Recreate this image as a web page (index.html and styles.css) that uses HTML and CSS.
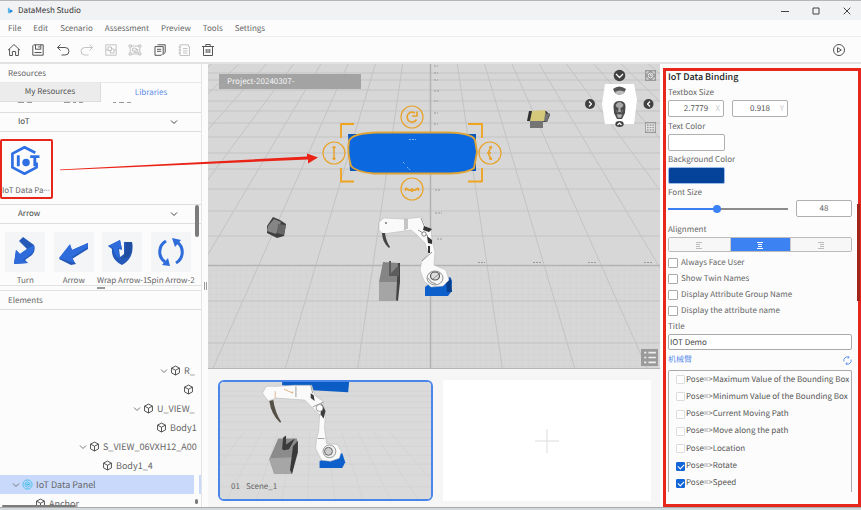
FILE: index.html
```html
<!DOCTYPE html>
<html lang="en">
<head>
<meta charset="utf-8">
<title>DataMesh Studio</title>
<link rel="stylesheet" href="styles.css">
</head>
<body>
<svg class="defs" aria-hidden="true">
  <symbol id="cube" viewBox="0 0 12 12"><path d="M6 1.2 10.3 3.4V8.6L6 10.9 1.7 8.6V3.4ZM1.7 3.4 6 5.7 10.3 3.4M6 5.7V10.9"/></symbol>
  <symbol id="chev" viewBox="0 0 8 8"><path d="M1 2.5 4 5.5 7 2.5"/></symbol>
</svg>

<header class="titlebar">
  <svg class="logo" viewBox="0 0 8 8"><path d="M1 .5 3 1.5V7.5L1 6.5Z" fill="#58b7ef"/><path d="M3 2.5 7 4.5 3 7Z" fill="#1683d8"/></svg>
  <span class="app-name">DataMesh Studio</span>
  <button class="win" aria-label="Minimize"><svg viewBox="0 0 8 8"><path d="M0 4.5H8"/></svg></button>
  <button class="win" aria-label="Maximize"><svg viewBox="0 0 8 8"><path d="M1 1H7V7H1Z"/></svg></button>
  <button class="win" aria-label="Close"><svg viewBox="0 0 8 8"><path d="M.7 .7 7.3 7.3M7.3 .7 .7 7.3"/></svg></button>
</header>

<nav class="menu">
  <a href="#">File</a><a href="#">Edit</a><a href="#">Scenario</a><a href="#">Assessment</a><a href="#">Preview</a><a href="#">Tools</a><a href="#">Settings</a>
</nav>

<div class="toolbar">
  <div class="tools">
    <button aria-label="Home"><svg viewBox="0 0 14 14"><path d="M1 7.2 7 1.5 13 7.2M2.6 6V12.5H5.4V8.5H8.6V12.5H11.4V6"/></svg></button>
    <button aria-label="Save"><svg viewBox="0 0 14 14"><path d="M1.8 2.8 2.8 1.8H12.2V12.2H1.8ZM4.5 1.8V6.2H9.8V1.8M8 3V4.8M3.5 9.5H10.5"/></svg></button>
    <button aria-label="Undo"><svg viewBox="0 0 14 14"><path d="M4.5 1.5 1.5 4.5 4.5 7.5M1.5 4.5H9.2A3.7 3.7 0 0 1 9.2 12H5.5"/></svg></button>
    <button aria-label="Redo" disabled><svg viewBox="0 0 14 14"><path d="M9.5 1.5 12.5 4.5 9.5 7.5M12.5 4.5H4.8A3.7 3.7 0 0 0 4.8 12H8.5"/></svg></button>
    <button aria-label="Group" disabled><svg viewBox="0 0 14 14"><path d="M1.8 1.8H12.2V12.2H1.8ZM4 4H7.5V7.5H4ZM7.5 6H10V10H6.2V7.5M1.8 7H4M10 7H12"/></svg></button>
    <button aria-label="Ungroup" disabled><svg viewBox="0 0 14 14"><path d="M1 2H3.5V4H1ZM10.5 2H13V4H10.5ZM1 10H3.5V12H1ZM10.5 10H13V12H10.5ZM3.5 3H10.5M3.5 11H10.5M2.2 4V10M11.8 4V10M4.5 5.2H8.2V8H4.5ZM8.2 6.5H9.8V9.5H6V8"/></svg></button>
    <button aria-label="Copy"><svg viewBox="0 0 14 14"><path d="M4.5 1.8H12.2V9.5L10 11.5M10.2 3.6H2V12.3H8.2L10.2 10.3ZM4 6.3H8.2M4 8.3H8.2"/></svg></button>
    <button aria-label="Paste" disabled><svg viewBox="0 0 14 14"><path d="M3 1.8H11.5V3.5H12.5V12.5H3ZM1.5 4H4M1.5 7H4M1.5 10H4M6 5.5H10.5M6 7.8H10.5M6 10H10.5"/></svg></button>
    <button aria-label="Delete"><svg viewBox="0 0 14 14"><path d="M1 3.5H13M4.8 3.5V1.5H9.2V3.5M2.5 3.5V12.5H11.5V3.5M5.2 6V10M7 6V10M8.8 6V10"/></svg></button>
  </div>
  <button class="play" aria-label="Play"><svg viewBox="0 0 14 14"><circle cx="7" cy="7" r="5.5"/><path d="M5.5 4.6 9.3 7 5.5 9.4Z"/></svg></button>
</div>

<main>
  <aside class="left">
    <h2 class="head">Resources</h2>
    <div class="tabs"><button class="tab">My Resources</button><button class="tab on">Libraries</button></div>
    <svg class="cut" viewBox="0 0 201 10"><path d="M18 .5H24M27 .5H32M64 .5H70M73 .5H76M79 .5H83M113 .5H116M119 .5H124M127 .5H131"/></svg>
    <button class="group">IoT<svg><use href="#chev"/></svg></button>
    <div class="iot">
      <button class="asset marked">
        <svg viewBox="0 0 30 30" fill="none" stroke="#2f6fe4" stroke-width="2.6"><path d="M25.500 7.500 15 2.200 3.300 8.300V21.700L15 27.800 26.700 21.700V17"/><path d="M9 10V20.500M20.500 11.300H29.500M25 11.300V20.500" stroke-width="2.800"/><circle cx="16.500" cy="17" r="3.600" fill="#2f6fe4" stroke="none"/></svg>
        <span>IoT Data Pa<i>···</i></span>
      </button>
    </div>
    <button class="group">Arrow<svg><use href="#chev"/></svg></button>
    <div class="tiles">
      <button class="tile"><svg viewBox="0 0 40 40"><path d="M14 9 18 5 29 13Q31 19 27 23L20 28 23 31 9 32 11 18 15 22 22 17Z" fill="#2459b8"/><path d="M11 18 15 22 22 17 29 13Q30 19 26 22L18 28 23 31 9 32Z" fill="#2e6bdb"/></svg><span>Turn</span></button>
      <button class="tile"><svg viewBox="0 0 40 40"><path d="M5 27 16 13 18 18 34 11 34 17 18 27 22 32 17 33Z" fill="#2459b8"/><path d="M5 26 16 12 18 18 34 11 34 15 18 25 21 31Z" fill="#2e6bdb"/></svg><span>Arrow</span></button>
      <button class="tile"><svg viewBox="0 0 40 40"><path d="M6 14 18 8 20 18 17 17 18 25 22 22 22 10H30Q33 26 20 33 9 28 10 17Z" fill="#2459b8"/><path d="M6 14 18 8 20 17 16 16 18 27Q12 24 11 16Z" fill="#2e6bdb"/><path d="M24 10H30Q31 20 26 25L20 27Q25 20 24 10Z" fill="#1f4d9f"/></svg><span>Wrap Arrow-1</span></button>
      <button class="tile"><svg viewBox="0 0 40 40"><g fill="none" stroke="#2e6bdb" stroke-width="3"><path d="M15 9A12.5 12.5 0 0 0 14 30"/><path d="M25 31A12.5 12.5 0 0 0 26 10"/></g><path d="M21 6 30 8 24 15ZM19 34 11 33 17 26Z" fill="#2e6bdb"/></svg><span>Spin Arrow-2</span></button>
    </div>
    <i class="vbar"></i>
    <div class="split"><i></i></div>
    <h2 class="head elements">Elements</h2>
    <ul class="tree">
      <li class="d6"><svg class="c"><use href="#chev"/></svg><svg><use href="#cube"/></svg><span>R_</span></li>
      <li class="d7"><svg><use href="#cube"/></svg></li>
      <li class="d4"><svg class="c"><use href="#chev"/></svg><svg><use href="#cube"/></svg><span>U_VIEW_</span></li>
      <li class="d5"><svg><use href="#cube"/></svg><span>Body1</span></li>
      <li class="d2"><svg class="c"><use href="#chev"/></svg><svg><use href="#cube"/></svg><span>S_VIEW_06VXH12_A00</span></li>
      <li class="d3"><svg><use href="#cube"/></svg><span>Body1_4</span></li>
      <li class="d0 sel"><svg class="c"><use href="#chev"/></svg><svg class="ring" viewBox="0 0 12 12"><circle cx="6" cy="6" r="5"/><path d="M6 3 8.6 4.5V7.5L6 9 3.4 7.5V4.5ZM5 5V7M6 5V7M7 5V7"/></svg><span>IoT Data Panel</span></li>
      <li class="d1"><svg><use href="#cube"/></svg><span>Anchor</span></li>
    </ul>
    <i class="hbar"></i><i class="dot"></i>
  </aside>
  <div class="gutter"><i></i></div>

  <section class="center">
    <div class="view">
      <svg class="scene" viewBox="208 64 452 304" preserveAspectRatio="xMidYMid slice">
        <defs><pattern id="fine" width="6" height="6" patternUnits="userSpaceOnUse"><path d="M0 0H6M0 0V6" stroke="#c8c8c8" stroke-width=".7" fill="none"/></pattern></defs>
        <rect x="208" y="64" width="452" height="304" fill="#d7d7d7"/>
        <rect x="208" y="266" width="452" height="102" fill="url(#fine)" opacity=".6"/>
        <path class="grid" d="M208 73H660M208 80H660M208 90H660M208 101H660M208 111H660M208 123H660M208 137H660M208 153H660M208 169H660M208 189H660M208 211H660M208 236H660M208 301H660M208 343H660"/>
        <path class="grid" d="M402.7 64 357.7 368M375.4 64 285.4 368M348.1 64 213.1 368M320.8 64 140.8 368M293.5 64 68.5 368M266.2 64-3.8 368M238.9 64-76.1 368M211.6 64-148.4 368M457.3 64 502.3 368M484.6 64 574.6 368M511.9 64 646.9 368M539.2 64 719.2 368M566.5 64 791.5 368M593.8 64 863.8 368M621.1 64 936.1 368M648.4 64 1008.4 368"/>
        <path class="axis" d="M208 265.5H660M430.5 64V368"/>
        <g class="ticks"><path d="M434 66H438M434 73H438M434 80H438M434 91H439M434 101H438M434 113H438M434 124H438M435 190H441M435 213H442M437 239H442M478 262.500H485M533 262.500H541M588 262.500H596M644 262.500H652"/></g>
        <path d="M527 121 529 111H546L550 115 547 122Z" fill="#303030"/><path d="M532 111 545 110 547 121H530Z" fill="#d4c97a"/><path d="M530 121H543V128H530ZM545 114 550 113 547 122 544 121Z" fill="#747474"/>
        <path d="M267 226 273 217 280 220 286 224 284 236 277 238 267 233Z" fill="#3f3f3f"/><path d="M268 226 274 219 281 222 276 234 267 231Z" fill="#858585"/><path d="M278 224 286 225 284 235 277 233Z" fill="#666"/>
        <path d="M383 262 399 263V282H379Z" fill="#858585"/><path d="M379 282H398V301H379Z" fill="#a5a5a5"/><path d="M398 263H400V282L398 301 396 300Z" fill="#444"/><path d="M389 261H391V273L399 265V276H389Z" fill="#5c5c5c"/>
        <g>
          <path d="M425 287 429 284 450 277 452 281 451 292 448 296H425Z" fill="#0d5fcc"/><path d="M446 281 451 278 452 292 447 292Z" fill="#083f8c"/>
          <path d="M379 222 384 218 404 219 422 217 426 226 431 229 432 240 435 252 434 265 446 270 449 280 443 286 431 287 424 281 420 270 422 260 428 254 425 243 417 235 411 230 383 234 379 230Z" fill="#fafafa" stroke="#bbb" stroke-width=".6"/>
          <path d="M405 219V230M407 219V229M421 218 425 228M418 230 428 236M422 261 432 252" stroke="#777" stroke-width=".8" fill="none"/>
          <path d="M382 233Q382 242 389 248L390 247Q386 241 385 233Z" fill="#444"/>
          <path d="M424 226 432 229 429 232 423 230ZM427 236 432 240V244L428 243ZM428 246H430V253H428Z" fill="#333"/>
          <circle cx="424" cy="234" r="2.200" fill="#fff" stroke="#555" stroke-width=".7"/><circle cx="386" cy="223" r="1" fill="#777"/>
          <ellipse cx="435" cy="278" rx="8" ry="7" fill="#f5f5f5" stroke="#777" stroke-width=".8"/><ellipse cx="435" cy="276" rx="4.500" ry="4" fill="#ddd" stroke="#555" stroke-width="1.200"/><path d="M428 278Q430 283 436 284M433 279 440 273" stroke="#777" fill="none" stroke-width=".8"/>
        </g>
        <path d="M348 134H476V171H350Z" fill="#0758bd"/>
        <path d="M349 141Q352 133 378 132.500H448Q472 133 475 140L477 152 474 168Q468 173 450 173.500H374Q356 172 351 166Q347 152 349 141Z" fill="#0b68df" stroke="#dea438" stroke-width="1.900"/>
        <path d="M409 139.500H416M403 162 405 164M407 167 410 170" stroke="#bad8fb" stroke-width=".7" stroke-dasharray="2 1"/>
        <g fill="none" stroke="#f0a31e" stroke-width="1.800"><path d="M354 124H341V138M468 124H482V138M341 168V181.500H354M482 168V181.500H468"/></g>
        <g fill="none" stroke="#e8a32c" stroke-width="1.200"><circle cx="334" cy="153" r="11"/><circle cx="412" cy="117" r="11"/><circle cx="490" cy="153" r="11"/><circle cx="412" cy="189" r="11"/>
          <path d="M334 147V159M332.500 148 334 146.500 335.500 148M332.500 158 334 159.500 335.500 158" stroke-width="1.500"/><path d="M415 113A5 5 0 1 0 416.500 119.500M412 116H417V111.500" stroke-width="1.700"/><path d="M492 147Q485 153 492 159M489 147.500 492 146.500M489 158.500 492 159.500M487 153H491" stroke-width="1.600"/><path d="M405.500 188Q412 193 418.500 188M405.500 191V188M418.500 191V188M412 188V192" stroke-width="1.600"/>
        </g>
      </svg>
      <span class="project">Project-20240307-</span>
      <svg class="gizmo" viewBox="584 68 74 66">
        <path d="M605 84H634L637 100 634 124H605L602 104Z" fill="#fff"/>
        <g fill="#414141"><circle cx="619.500" cy="75.500" r="5.800"/><circle cx="590" cy="104" r="5"/><circle cx="648.500" cy="104" r="5"/><ellipse cx="619.500" cy="124" rx="4.200" ry="3"/></g>
        <path d="M616 74 619.500 77.500 623 74M589 101.500 591.500 104 589 106.500M650 101.500 647.500 104 650 106.500M617.500 125 619.500 123 621.500 125" fill="none" stroke="#fff" stroke-width="1.200"/>
        <path d="M613 89Q619 84 626 89L624 93Q619 96 615 93Z" fill="#555"/><path d="M615 92Q620 89 625 92L623 94H616Z" fill="#bbb"/>
        <path d="M613.500 106Q614 101 619.500 101T625.500 106L625 113 622 119H617L614 113Z" fill="#4a4a4a"/><path d="M615.500 105Q619.500 99 623.500 105L622.500 107 620.500 108 621 112H618L618.500 108 616.500 107Z" fill="#a8a8a8"/><path d="M616 110 618 113M623 110 621 113M617 114.500H622L621 117.500H618Z" fill="#b5b5b5" stroke="#999" stroke-width=".6"/>
      </svg>
      <button class="vb v1" aria-label="Reset view"><svg viewBox="0 0 12 12"><path d="M2 4V2H4M8 2H10V4M10 8V10H8M4 10H2V8"/><circle cx="6" cy="6" r="2.500"/><path d="M6 4.500V6H7.500"/></svg></button>
      <button class="vb v2" aria-label="Grid"><svg viewBox="0 0 12 12"><path d="M1.500 2H10.500V10H1.500ZM1.500 4.700H10.500M1.500 7.300H10.500M4.500 2V10M7.500 2V10"/></svg></button>
      <button class="vb v3" aria-label="List"><svg viewBox="0 0 16 16"><path d="M3 3.500H5M7 3.500H14M3 8H5M7 8H14M3 12.500H5M7 12.500H14" stroke-width="1.600"/></svg></button>
    </div>
    <div class="scenes">
      <button class="card">
        <svg viewBox="219 380 214 120" preserveAspectRatio="xMidYMid slice">
          <rect x="219" y="380" width="214" height="120" fill="#dadada"/>
          <path d="M219 390H433M219 395H433M219 401H433M219 407H433M219 414H433M219 421H433M219 429H433M219 437H433M219 446H433M219 455H433M219 464H433M219 475H433M219 487H433M245 430 219 463M262 430 226 500M278 430 256 500M294 430 282 500M310 430 308 500M326 430 336 500M342 430 364 500M358 430 392 500M374 430 420 500M390 430 433 480" stroke="#d0d0d0" stroke-width=".6" fill="none"/>
          <path d="M282 380H350L349 391 313 389 282 384Z" fill="#0b5cc4"/>
          <path d="M269 459 278 438 297 438 298 446 292 474H274Z" fill="#8b8b8b"/><path d="M269 458 293 457 292 474H274Z" fill="#a6a6a6"/><path d="M293 446 298 440V452L292 474 290 470Z" fill="#393939"/><path d="M282 449 283 437 286 435V444L295 438 289 449 284 450Z" fill="#3b3b3b"/>
          <path d="M320 461 325 458 343 453 346 462 343 468H320Z" fill="#0d5fcc"/>
          <path d="M262 392 266 385 277 385 294 384 312 384 315 394 323 400 326 413 325 427 327 443 338 444 342 451 340 458 331 461 322 460 316 448 317 438 319 431 320 414 313 407 305 399 276 397 268 400Z" fill="#fafafa" stroke="#bbb" stroke-width=".6"/>
          <path d="M284 388 293 392 292 390M275 397V390" stroke="#d8a46c" fill="none" stroke-width=".8"/><path d="M296 385V396M311 384 313 392M313 406 324 401M320 414H325M318 438H325" stroke="#888" fill="none" stroke-width=".8"/>
          <path d="M269 400Q271 414 280 422L281 421Q275 412 273 399Z" fill="#555147"/><path d="M311 392 314 394 315 400 311 397ZM322 402 326 410 324 418 321 413Z" fill="#3c3c3c"/>
          <circle cx="320" cy="407" r="3.500" fill="#fff" stroke="#777" stroke-width=".7"/><circle cx="330" cy="451" r="6.500" fill="#eee" stroke="#999"/><circle cx="329" cy="451" r="4" fill="#ccc" stroke="#666"/>
        </svg>
        <span class="cap"><span>01</span><span>Scene_1</span></span>
      </button>
      <button class="card add" aria-label="Add scene"><svg viewBox="0 0 24 24"><path d="M12 0V24M0 12H24"/></svg></button>
    </div>
  </section>

  <aside class="right">
    <h1>IoT Data Binding</h1>
    <div class="lab">Textbox Size</div>
    <div class="row pair"><label class="num"><input value="2.7779" aria-label="Width"><span>X</span></label><label class="num"><input value="0.918" aria-label="Height"><span>Y</span></label></div>
    <div class="lab">Text Color</div>
    <button class="swatch" aria-label="Text Color"></button>
    <div class="lab">Background Color</div>
    <button class="swatch blue" aria-label="Background Color"></button>
    <label class="lab" for="fs">Font Size</label>
    <div class="row size"><input id="fs" type="range" min="0" max="120" value="48"><input class="fsnum" value="48" aria-label="Font size value"></div>
    <div class="lab al">Alignment</div>
    <div class="seg">
      <button aria-label="Left"><svg viewBox="0 0 8 8"><path d="M1 1.500H7M1 3.500H5M1 5.500H5M1 7.500H7"/></svg></button>
      <button class="on" aria-label="Center"><svg viewBox="0 0 8 8"><path d="M1 1.500H7M2 3.500H6M2 5.500H6M1 7.500H7"/></svg></button>
      <button aria-label="Right"><svg viewBox="0 0 8 8"><path d="M1 1.500H7M3 3.500H7M3 5.500H7M1 7.500H7"/></svg></button>
    </div>
    <div class="opts">
      <label><input type="checkbox">Always Face User</label>
      <label><input type="checkbox">Show Twin Names</label>
      <label><input type="checkbox">Display Attribute Group Name</label>
      <label><input type="checkbox">Display the attribute name</label>
    </div>
    <label class="lab" for="ti">Title</label>
    <input id="ti" class="title" value="IOT Demo">
    <div class="src"><a href="#" lang="zh">机械臂</a><button aria-label="Refresh"><svg viewBox="0 0 10 10"><path d="M1 6A4 4 0 0 1 6.500 1.300M9 4A4 4 0 0 1 3.500 8.700M5.200 .2 6.800 1.400 5.500 3M4.800 9.800 3.200 8.600 4.500 7"/></svg></button></div>
    <div class="list">
      <label><input type="checkbox">Pose=&gt;Maximum Value of the Bounding Box</label>
      <label><input type="checkbox">Pose=&gt;Minimum Value of the Bounding Box</label>
      <label><input type="checkbox">Pose=&gt;Current Moving Path</label>
      <label><input type="checkbox">Pose=&gt;Move along the path</label>
      <label><input type="checkbox">Pose=&gt;Location</label>
      <label><input type="checkbox" checked>Pose=&gt;Rotate</label>
      <label><input type="checkbox" checked>Pose=&gt;Speed</label>
    </div>
    <i class="rbar"></i>
  </aside>
  <svg class="pointer" viewBox="0 0 260 24"><path d="M0 18.500 247 5.500V2.500L258 6.500 248 12.500V8.500L0 19.200Z" fill="#ea2316"/></svg>
</main>
<footer></footer>
</body>
</html>
```
FILE: styles.css
```css
* { box-sizing: border-box; }
body {
  margin: 0;
  height: 100vh;
  display: flex;
  flex-direction: column;
  overflow: hidden;
  background: #fcfcfc;
  color: #666;
  font: 8px/12px "Noto Sans CJK SC", "Noto Sans", sans-serif;
  text-rendering: geometricPrecision;
}
button, input { font: inherit; color: inherit; margin: 0; padding: 0; border: 0; background: none; min-width: 0; text-rendering: inherit; }
button { display: block; }
a { color: inherit; text-decoration: none; }
svg { display: block; fill: none; stroke-linejoin: round; }
h1, h2 { margin: 0; font: inherit; }
.defs { position: absolute; width: 0; height: 0; }

.titlebar { flex: none; height: 20px; display: flex; align-items: center; padding: 0 10px 0 7px; background: #f1f2f4; border-top: 1px solid #b5b6b9; color: #333; }
.logo { width: 7px; height: 7px; margin-right: 4px; }
.app-name { flex: 1; }
.win { margin-left: 23px; }
.win svg { width: 8px; height: 8px; stroke: #444; }

.menu { flex: none; height: 17px; display: flex; align-items: center; gap: 12px; padding: 2px 0 0 8px; border-bottom: 1px solid #efefef; }
.toolbar { flex: none; height: 27px; display: flex; align-items: center; justify-content: space-between; padding: 0 15px 0 7px; border-bottom: 2px solid #e3e3e3; }
.tools { display: flex; justify-content: space-between; width: 208px; }
.toolbar svg { width: 14px; height: 14px; stroke: #555; }
.toolbar button:disabled svg { stroke: #c3c3c3; }

main { flex: 1; min-height: 0; display: flex; position: relative; }
.left { position: relative; width: 201px; flex: none; display: flex; flex-direction: column; overflow: hidden; }
.head { height: 18px; line-height: 19px; padding-left: 8px; flex: none; }
.tabs { display: flex; height: 20px; flex: none; border-top: 1px solid #e8e8e8; }
.tab { flex: 1; }
.tab:first-child { background: #ececec; border: 1px solid #dcdcdc; border-width: 0 1px 1px 0; color: #555; }
.tab.on { color: #5e8fe8; }
.cut { height: 10px; width: 100%; stroke: #999; flex: none; }
.group { height: 20px; flex: none; display: flex; align-items: center; justify-content: space-between; padding: 0 23px 0 18px; border: 1px solid #dedede; border-width: 1px 0; color: #444; }
.group svg { width: 8px; height: 8px; stroke: #444; }
.iot { height: 72px; flex: none; padding-top: 7px; }
.asset { width: 53px; height: 60px; display: flex; flex-direction: column; justify-content: space-between; white-space: nowrap; text-align: left; }
.asset.marked { border: 2px solid #e8271b; padding-top: 4px; border-radius: 2px; }
.asset svg { width: 31px; height: 31px; margin-left: 7px; }
.asset i { font-family: "Noto Sans", sans-serif; font-style: normal; }
.tiles { height: 61px; flex: none; display: grid; grid-template-columns: repeat(4, 1fr); padding: 8px 6px 0 1px; overflow: hidden; }
.tile { display: flex; flex-direction: column; align-items: center; gap: 3px; white-space: nowrap; }
.tile svg { width: 40px; height: 40px; background: #f4f5f7; }
.vbar, .hbar, .dot { position: absolute; background: #7c7c7c; border-radius: 2px; }
.vbar { right: 2px; top: 141px; width: 4px; height: 32px; }
.hbar { left: 2px; bottom: 0; width: 74px; height: 2px; }
.dot { right: 3px; bottom: 3px; width: 3px; height: 5px; }
.split { height: 6px; flex: none; border: 1px solid #e2e2e2; border-width: 1px 0; display: flex; justify-content: center; align-items: center; }
.split i { width: 8px; height: 2px; background: #999; }
.elements { border-bottom: 1px solid #dedede; height: 19px; }
.tree { flex: 1; min-height: 0; margin: 0; padding: 51px 0 0; list-style: none; font-size: 9px; overflow: hidden; }
.tree li { height: 19px; display: flex; align-items: center; white-space: nowrap; }
.tree svg { width: 11px; height: 11px; stroke: #444; margin-right: 3px; flex: none; }
.tree .c { width: 8px; height: 8px; stroke: #777; margin-right: 2px; }
.tree .sel { background: linear-gradient(to right, #c8d9fb 194px, #fcfcfc 194px 199px, #c8d9fb 199px); }
.tree .ring { stroke: #3fbce8; }
.d0 { padding-left: 12px; }
.d1 { padding-left: 35px; }
.d2 { padding-left: 79px; }
.d3 { padding-left: 102px; }
.d4 { padding-left: 133px; }
.d5 { padding-left: 156px; }
.d6 { padding-left: 160px; }
.d7 { padding-left: 183px; }
.gutter { width: 7px; flex: none; border-left: 1px solid #e4e4e4; display: flex; align-items: center; justify-content: center; }
.gutter i { width: 3px; height: 8px; border: 1px solid #999; border-width: 0 1px; }

.center { flex: 1; min-width: 0; display: flex; flex-direction: column; background: #f6f6f7; }
.view { position: relative; flex: 1; min-height: 0; border-bottom: 1px solid #b5b5b5; }
.scene { width: 100%; height: 100%; }
.grid { stroke: #c3c3c3; stroke-width: 1; }
.axis { stroke: #b3b3b3; stroke-width: 1.5; }
.ticks { stroke: #999; stroke-width: 1; stroke-dasharray: 2 1; }
.project { position: absolute; left: 11px; top: 10px; width: 142px; height: 15px; line-height: 15px; padding-left: 8px; background: #a3a3a3; color: #f4f4f4; }
.gizmo { position: absolute; right: 2px; top: 4px; width: 74px; height: 66px; }
.vb { position: absolute; background: #9a9a9a; }
.vb svg { width: 100%; height: 100%; stroke: #eee; }
.v1 { right: 4px; top: 6px; width: 11px; height: 11px; }
.v2 { right: 4px; top: 58px; width: 11px; height: 11px; }
.v3 { right: 2px; bottom: 2px; width: 17px; height: 17px; }
.scenes { flex: none; display: grid; grid-template-columns: 215fr 208fr; gap: 10px; padding: 11px 9px 6px 10px; }
.card { position: relative; height: 121px; width: 100%; border: 2px solid #4a86ea; border-radius: 6px; overflow: hidden; }
.card > svg { width: 100%; height: 100%; }
.cap { position: absolute; left: 11px; bottom: 6px; display: flex; gap: 6px; }
.card.add { border: 0; border-radius: 0; background: #fff; display: flex; align-items: center; justify-content: center; }
.card.add > svg { width: 24px; height: 24px; stroke: #ddd; }

.right { position: relative; flex: none; width: 198px; margin: 4px 0 0 3px; padding: 0 6px 0 2px; border: 3px solid #e8271b; display: flex; flex-direction: column; }
h1 { font-size: 9px; font-weight: 500; line-height: 12px; margin-bottom: 2px; color: #222; }
.lab { display: block; height: 15px; line-height: 15px; flex: none; }
.row { display: flex; align-items: center; }
.pair { margin-bottom: 2px; }
.num { position: relative; width: 56px; height: 17px; margin-right: 8px; border: 1px solid #b0b0b0; border-radius: 2px; display: flex; align-items: center; background: #fff; }
.num input { width: 100%; text-align: center; color: #555; }
.num span { position: absolute; right: 3px; color: #ccc; }
.swatch { width: 57px; height: 17px; flex: none; border: 1px solid #b0b0b0; border-radius: 2px; background: #fff; margin-bottom: 1px; }
.swatch.blue { background: #05429a; border-color: #9bbbe8; }
.size { height: 17px; gap: 8px; }
input[type="range"] { appearance: none; flex: 1; height: 8px; background: linear-gradient(to right, #3b7ef0 0 40%, #8c8c8c 40%) center / 100% 2px no-repeat; }
input[type="range"]::-webkit-slider-thumb { appearance: none; width: 8px; height: 8px; border-radius: 50%; background: #3b82f6; }
.fsnum { width: 56px; height: 17px; border: 1px solid #b0b0b0; border-radius: 2px; text-align: center; background: #fff; }
.al { margin-top: 5px; }
.seg { display: grid; grid-template-columns: repeat(3, 1fr); height: 15px; flex: none; border: 1px solid #bbb; border-radius: 2px; }
.seg button { display: flex; align-items: center; justify-content: center; background: #f7f7f7; }
.seg button + button { border-left: 1px solid #ccc; }
.seg svg { width: 8px; height: 8px; stroke: #bbb; }
.seg .on { background: #3d82f2; }
.seg .on svg { stroke: #fff; }
.opts { padding-top: 3px; flex: none; }
.opts label { display: flex; align-items: center; height: 16px; gap: 3px; }
input[type="checkbox"] { appearance: none; width: 10px; height: 10px; border: 1px solid #aaa; border-radius: 1px; background: #fff; flex: none; }
.title { width: 100%; height: 16px; flex: none; border: 1px solid #aaa; border-radius: 2px; padding: 0 1px; color: #444; background: #fff; }
.src { display: flex; justify-content: space-between; align-items: center; height: 20px; flex: none; color: #5e8fe8; }
.src svg { width: 9px; height: 9px; stroke: #4a86ea; }
.list { height: 122px; flex: none; display: grid; grid-auto-rows: 1fr; border: 1px solid #aaa; border-bottom: 0; border-radius: 2px 2px 0 0; padding-left: 7px; color: #555; }
.list label { display: flex; align-items: center; gap: 1px; white-space: nowrap; }
.list input { width: 9px; height: 9px; border-color: #ddd; }
.list input:checked { border-color: #1265d8; background: #1265d8; display: grid; place-items: center; }
.list input:checked::before { content: ""; width: 5px; height: 3px; border: solid #fff; border-width: 0 0 1px 1px; transform: rotate(-45deg); }
.rbar { position: absolute; right: -2px; top: 133px; width: 3px; height: 97px; background: #9e241c; }
.pointer { position: absolute; left: 60px; top: 87px; width: 260px; height: 24px; }
footer { flex: none; height: 3px; background: #d3dadd; border-top: 1px solid #aaa; }
```
